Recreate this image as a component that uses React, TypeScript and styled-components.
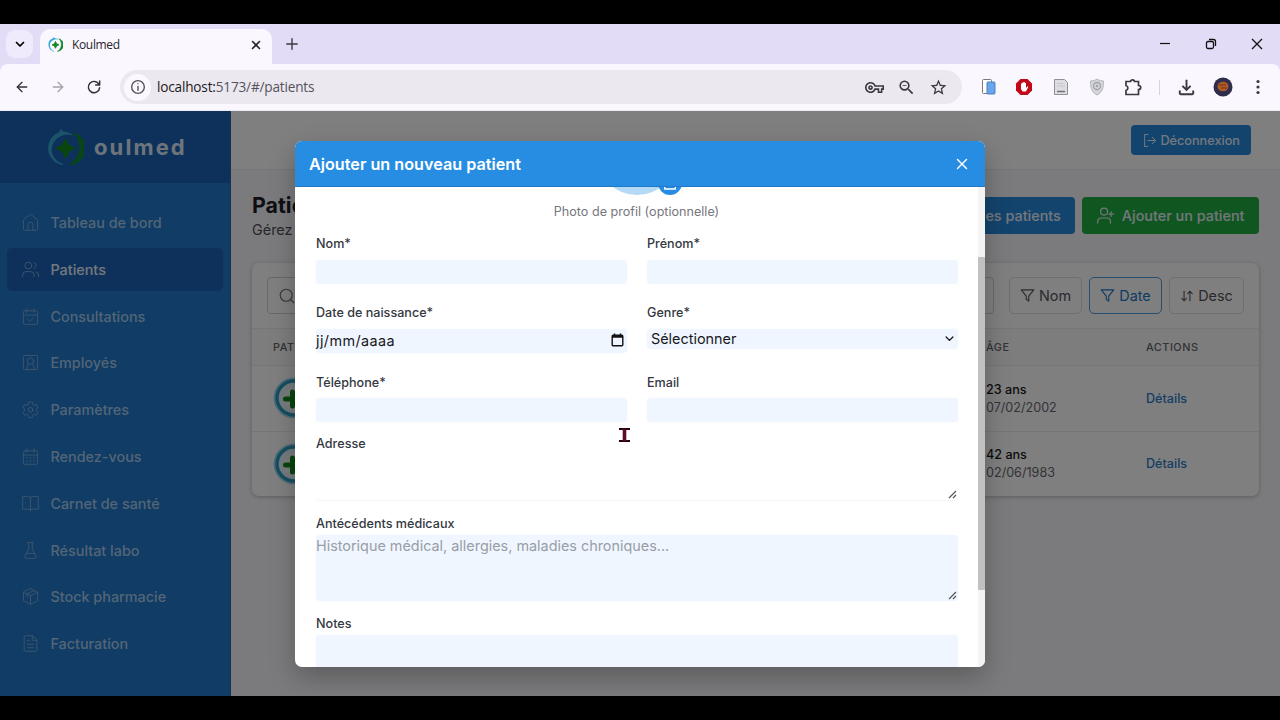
import React from "react";
import styled, {createGlobalStyle} from "styled-components";
import {
  ArrowDownUp,
  ArrowLeft,
  ArrowRight,
  Search,
  X,
} from "lucide-react";
import {
  MdOutlineFileDownload,
  MdOutlineStarBorder,
  MdOutlineVpnKey,
  MdOutlineZoomOut,
} from "react-icons/md";

const GlobalStyle = createGlobalStyle`
  * {
    box-sizing: border-box;
  }

  body {
    margin: 0;
    background: #000;
    font-family: Inter, "Liberation Sans", sans-serif;
    overflow: hidden;
  }
`;

const Screen = styled.div`
  width: 1280px;
  height: 720px;
  padding: 24px 0;
  background: #000;
  display: flex;
  flex-direction: column;
`;

/* Browser */

const TabStrip = styled.div`
  height: 40px;
  flex: none;
  display: flex;
  align-items: center;
  background: #e2dcf6;
  padding-left: 6px;
`;

const TabSearch = styled.div`
  width: 27px;
  height: 28px;
  border-radius: 9px;
  background: #f0ebfc;
  display: flex;
  align-items: center;
  justify-content: center;
`;

const Tab = styled.div`
  width: 232px;
  height: 35px;
  margin: 5px 0 0 7px;
  padding: 0 9px 4px 8px;
  border-radius: 10px 10px 0 0;
  background: #faf7fe;
  display: flex;
  align-items: center;
  font-family: "Open Sans", "Noto Sans", sans-serif;
  font-size: 12px;
  letter-spacing: -0.35px;
  color: #26242b;
`;

const TabTitle = styled.span`
  margin-left: 9px;
  flex: 1;
`;

const NewTab = styled.div`
  margin-left: 13px;
  display: flex;
  flex: 1;
  color: #3b3940;
`;

const WindowButtons = styled.div`
  display: flex;
  align-items: center;
  gap: 34px;
  margin-right: 17px;
`;

const Toolbar = styled.div`
  height: 47px;
  flex: none;
  display: flex;
  align-items: center;
  background: #faf7fe;
  border-bottom: 1px solid #eeeaf2;
  border-radius: 8px 8px 0 0;
  padding-left: 14px;
  overflow: hidden;
`;

const ToolbarBack = styled.div`
  background: #e2dcf6;
`;

const NavButtons = styled.div`
  width: 106px;
  flex: none;
  display: flex;
  gap: 20px;
  color: #333138;
`;

const AddressBar = styled.div`
  width: 842px;
  flex: none;
  height: 34px;
  border-radius: 17px;
  background: #ebe8f0;
  display: flex;
  align-items: center;
  padding: 0 14px 0 4px;
  font-family: "Open Sans", "Noto Sans", sans-serif;
  font-size: 13.6px;
  letter-spacing: -0.18px;
  color: #55525c;

  b {
    font-weight: 400;
    color: #1d1b20;
  }
`;

const SiteInfo = styled.div`
  width: 27px;
  height: 27px;
  border-radius: 50%;
  background: #fbf9ff;
  display: flex;
  align-items: center;
  justify-content: center;
  margin-right: 6px;
`;

const Url = styled.span`
  flex: 1;
  padding-bottom: 1px;
`;

const BarIcons = styled.div`
  display: flex;
  align-items: center;
  gap: 13px;
  color: #3b3940;
`;

const Extensions = styled.div`
  flex: none;
  display: flex;
  align-items: center;
  padding-left: 8px;
  color: #3b3940;
`;

const ToolSlot = styled.div<{$width?: number}>`
  width: ${({$width}) => $width || 36.3}px;
  flex: none;
  display: flex;
  justify-content: center;
`;

const Divider = styled.div`
  width: 1px;
  height: 15px;
  background: #d8d3e2;
`;

/* Application */

const Page = styled.div`
  position: relative;
  flex: 1;
  min-height: 0;
  display: flex;
  background: #f6f6fa;
  overflow: hidden;
`;

const Sidebar = styled.aside`
  width: 231px;
  flex: none;
  background: #2078ca;
  border-right: 1px solid #35689e;
`;

const Brand = styled.div`
  height: 72px;
  background: #1a62b4;
  display: flex;
  align-items: center;
  padding-left: 47px;
  font-size: 22px;
  font-weight: 700;
  letter-spacing: 2.1px;
  color: #dce9f6;
`;

const BrandName = styled.span`
  margin-left: 10px;
`;

const Menu = styled.nav`
  padding: 18px 7px 0 7px;
  display: flex;
  flex-direction: column;
  gap: 3.8px;
`;

const MenuItem = styled.div<{$active?: boolean}>`
  height: 43px;
  border-radius: 5px;
  padding-left: 15px;
  display: flex;
  align-items: center;
  gap: 11.4px;
  font-size: 14.4px;
  font-weight: 500;
  color: ${({$active}) => ($active ? "#e8f1fb" : "#a6cbec")};
  background: ${({$active}) => ($active ? "#1a62b4" : "transparent")};

  svg {
    color: #74a9db;
  }
`;

const Main = styled.main`
  flex: 1;
  min-width: 0;
`;

const TopBar = styled.header`
  height: 59px;
  background: #fff;
  border-bottom: 1px solid #e8e8ec;
  display: flex;
  align-items: center;
  justify-content: flex-end;
  padding-right: 29px;
`;

const Button = styled.button<{$color: string; $small?: boolean}>`
  height: ${({$small}) => ($small ? "30px" : "37px")};
  border: none;
  border-radius: 4px;
  background: ${({$color}) => $color};
  color: #e8f0fa;
  font-family: inherit;
  font-size: ${({$small}) => ($small ? "12.7px" : "14.4px")};
  font-weight: 500;
  display: flex;
  align-items: center;
  gap: ${({$small}) => ($small ? "4px" : "8px")};
  white-space: nowrap;
  padding: ${({$small}) => ($small ? "0 11px 0 12px" : "0 14.5px")};
`;

const Content = styled.div`
  padding: 23px 21px 0;
`;

const Heading = styled.div`
  display: flex;
  justify-content: space-between;
  height: 70px;
`;

const Title = styled.h1`
  margin: 0;
  font-size: 21.4px;
  line-height: 25px;
  font-weight: 700;
  color: #1c1c28;
`;

const Subtitle = styled.p`
  margin: 0;
  font-size: 14.4px;
  line-height: 24px;
  color: #505058;
`;

const Actions = styled.div`
  display: flex;
  gap: 7px;
  padding-top: 4px;
`;

const Card = styled.section`
  height: 233px;
  background: #fff;
  border-radius: 7px;
  box-shadow: 0 1px 4px rgba(0, 0, 0, 0.25);
`;

const Filters = styled.div`
  height: 65px;
  display: flex;
  align-items: center;
  padding: 0 15px;
`;

const SearchBox = styled.div`
  width: 727px;
  flex: none;
  height: 37px;
  border: 1px solid #d0d0d4;
  border-radius: 4px;
  display: flex;
  align-items: center;
  padding-left: 10px;
  color: #707078;
  margin-right: 15px;
`;

const FilterButton = styled.div<{$width: number; $active?: boolean}>`
  width: ${({$width}) => $width}px;
  flex: none;
  height: 37px;
  margin-right: 7px;
  border: 1px solid ${({$active}) => ($active ? "#4a9ae0" : "#dcdce0")};
  border-radius: 5px;
  display: flex;
  align-items: center;
  justify-content: center;
  gap: 4px;
  font-size: 14.4px;
  color: ${({$active}) => ($active ? "#1f78c8" : "#55555c")};
`;

const TableRow = styled.div<{$head?: boolean}>`
  height: ${({$head}) => ($head ? "37px" : "65.5px")};
  display: grid;
  grid-template-columns: 713px 160px 1fr;
  align-items: center;
  padding-left: 21px;
  border-top: 1px solid #ececf0;
  background: ${({$head}) => ($head ? "#fafafa" : "transparent")};
  font-size: ${({$head}) => ($head ? "10.8px" : "12.6px")};
  font-weight: ${({$head}) => ($head ? 500 : 400)};
  letter-spacing: ${({$head}) => ($head ? "0.55px" : "0")};
  color: #66666e;
`;

const Age = styled.div`
  line-height: 18px;
  padding-top: 1px;

  strong {
    display: block;
    font-weight: 500;
    color: #18181c;
  }
`;

const DetailsLink = styled.a`
  font-weight: 500;
  color: #2b7cc6;
`;

/* Modal */

const Overlay = styled.div`
  position: absolute;
  inset: 0;
  background: rgba(0, 0, 0, 0.5);
  display: flex;
  justify-content: center;
  padding-top: 29.5px;
`;

const Modal = styled.div`
  width: 690px;
  height: 526.5px;
  border-radius: 7px;
  background: #fff;
  overflow: hidden;
  display: flex;
  flex-direction: column;
  box-shadow: 0 10px 26px rgba(0, 0, 0, 0.25);
`;

const ModalHeader = styled.div`
  height: 46.5px;
  flex: none;
  background: #268de2;
  border-bottom: 1px solid #2279c6;
  color: #fff;
  font-size: 16.2px;
  font-weight: 600;
  display: flex;
  align-items: center;
  justify-content: space-between;
  padding: 1px 14px 0 14px;
`;

const ModalBody = styled.div`
  flex: 1;
  min-height: 0;
  display: flex;
  overflow: hidden;
`;

const Form = styled.div`
  flex: 1;
  padding: 0 20px 0 21px;
  margin-top: -72px;
`;

const PhotoField = styled.div`
  height: 120px;
  padding-right: 1px;
  display: flex;
  flex-direction: column;
  align-items: center;
  font-size: 12.6px;
  color: #77777e;
`;

const Photo = styled.div`
  position: relative;
  width: 80px;
  height: 80px;
  border-radius: 50%;
  background: #b4d9f7;
  margin-bottom: 9px;
`;

const PhotoBadge = styled.div`
  position: absolute;
  right: -5px;
  bottom: 0;
  width: 24px;
  height: 24px;
  border-radius: 50%;
  background: #268de2;
  color: #fff;
  display: flex;
  align-items: center;
  justify-content: center;
`;

const Columns = styled.div<{$height: number}>`
  display: grid;
  grid-template-columns: 310.5px 311px;
  gap: 20.5px;
  height: ${({$height}) => $height}px;
`;

const Field = styled.div<{$height?: number}>`
  height: ${({$height}) => ($height ? `${$height}px` : "auto")};
`;

const Label = styled.div<{$gap: number}>`
  height: 18px;
  line-height: 18px;
  margin-bottom: ${({$gap}) => $gap}px;
  font-size: 12.6px;
  font-weight: 500;
  color: #34383f;
`;

const Control = styled.div<{$height: number; $plain?: boolean}>`
  height: ${({$height}) => $height}px;
  border-radius: 4px;
  background: ${({$plain}) => ($plain ? "#fff" : "#f0f6ff")};
  box-shadow: ${({$plain}) => ($plain ? "0 1px 1px #f4f4f6" : "0 0 2px #f0f6ff")};
  display: flex;
  align-items: center;
  justify-content: space-between;
  font-size: 14.4px;
  color: #18181c;
`;

const SelectControl = styled(Control)`
  padding: 0 4px 1px 4px;
`;

const DateControl = styled(Control)`
  padding: 0 3px 2px 0;
  letter-spacing: 0.42px;
`;

const Area = styled(Control)`
  align-items: flex-start;
  line-height: 22px;
  color: #989ea6;

  svg {
    align-self: flex-end;
    margin: 0 1px 1px auto;
  }
`;

const Scrollbar = styled.div`
  width: 7px;
  background: #f4f4f4;
  padding-top: 70px;
`;

const Thumb = styled.div`
  height: 333px;
  border-radius: 1px;
  background: #c1c1c1;
`;

const Pointer = styled.svg`
  position: absolute;
  left: 618px;
  top: 316px;
`;

const Icon: React.FC<{size?: number; width?: number; children: React.ReactNode}> = ({
  size = 17,
  width = 1.4,
  children,
}) => (
  <svg
    width={size}
    height={size}
    viewBox="0 0 24 24"
    fill="none"
    stroke="currentColor"
    strokeWidth={width}
    strokeLinecap="round"
    strokeLinejoin="round"
  >
    {children}
  </svg>
);

const Calendar = () => (
  <>
    <rect x="2" y="4" width="20" height="19" rx="2" />
    <path d="M2 10h20M7 1v5M17 1v5" />
  </>
);

const Funnel = () => (
  <Icon size={15} width={1.8}>
    <path d="M2 3h20l-8 10v8l-4-3v-5z" />
  </Icon>
);

const Grip = () => (
  <svg width="9" height="9" viewBox="0 0 9 9" stroke="#55555c" strokeWidth="1.2">
    <path d="M1 8 8 1M5 8l3-3" />
  </svg>
);

const Logo: React.FC<{size: number}> = ({size}) => (
  <svg width={size} height={size} viewBox="0 0 38 38" fill="none">
    <path d="M13 3A17.5 17.5 0 0 0 17 37A15.5 15.5 0 0 1 14 7.500Q20 4 27 7Q21 1.500 13 3z" fill="#39a9d9" />
    <path d="M16 36.5A17 17 0 0 1 14 4.5" stroke="#39a9d9" strokeWidth="1.5" />
    <path d="M27 4A16.5 16.5 0 0 1 23 36.5A20 20 0 0 0 27 4z" fill="#148a35" stroke="#148a35" />
    <circle cx="14.5" cy="2" r="1.6" fill="#39a9d9" />
    <path
      d="M19 11.5 21.5 17 27.5 19.8 21.5 22.5 19 28.5 16.5 22.5 10.5 19.8 16.5 17z"
      fill="#148a1c"
      stroke="#148a1c"
      strokeWidth="2.5"
      strokeLinejoin="round"
    />
  </svg>
);

const PatientAvatar = () => (
  <svg width="42" height="42" viewBox="0 0 42 42">
    <circle cx="21" cy="21" r="20.5" fill="#a3dcf1" />
    <circle cx="21" cy="21" r="17" fill="#e8f7fc" stroke="#2c9fc3" strokeWidth="3.5" />
    <circle cx="24" cy="22" r="13" fill="#f6fbfd" />
    <path
      d="M19.5 15v14M12.5 22h15"
      stroke="#128a17"
      strokeWidth="5"
      strokeLinecap="round"
    />
  </svg>
);

const menu = [
  {
    label: "Tableau de bord",
    icon: (
      <>
        <path d="M2 9.5v12a1.5 1.5 0 0 0 1.5 1.5h17a1.5 1.5 0 0 0 1.5-1.5v-12a3 3 0 0 0-1-2l-7.5-6.2a2.4 2.4 0 0 0-3 0L3 7.5a3 3 0 0 0-1 2z" />
        <path d="M8.5 23v-8a3.5 3.5 0 0 1 7 0v8" />
      </>
    ),
  },
  {
    label: "Patients",
    icon: (
      <>
        <circle cx="9" cy="6.5" r="4.8" />
        <path d="M1 22v-2.5a4.5 4.5 0 0 1 4.5-4.5h7a4.5 4.5 0 0 1 4.5 4.5V22M17 2a4.8 4.8 0 0 1 0 9M20 15.5a4.5 4.5 0 0 1 3.3 4.2V22" />
      </>
    ),
  },
  {
    label: "Consultations",
    icon: (
      <>
        <Calendar />
        <path d="m8 16 3 3 5.5-5.5" />
      </>
    ),
  },
  {
    label: "Employés",
    icon: (
      <>
        <rect x="2" y="2" width="20" height="20" rx="1.5" />
        <circle cx="12" cy="10" r="4.5" />
        <path d="m9 13.5-3 8M15 13.5l3 8" />
      </>
    ),
  },
  {
    label: "Paramètres",
    icon: (
      <>
        <path d="M9.7 1.5h4.6l.8 3.3 2 1.2 3.3-1 2.3 4-2.5 2.3v2.4l2.5 2.3-2.3 4-3.3-1-2 1.2-.8 3.3H9.7l-.8-3.3-2-1.2-3.3 1-2.3-4 2.5-2.3v-2.4L1.3 9l2.3-4 3.3 1 2-1.2z" />
        <circle cx="12" cy="12.5" r="3.3" />
      </>
    ),
  },
  {
    label: "Rendez-vous",
    icon: (
      <>
        <Calendar />
        <path d="M7 14h.01M12 14h.01M17 14h.01M7 18.5h.01M12 18.5h.01M17 18.5h.01" strokeWidth="2.2" />
      </>
    ),
  },
  {
    label: "Carnet de santé",
    icon: (
      <path d="M12 5v17M12 5a3 3 0 0 0-3-3H1v18h8a3 3 0 0 1 3 2 3 3 0 0 1 3-2h8V2h-8a3 3 0 0 0-3 3z" />
    ),
  },
  {
    label: "Résultat labo",
    icon: (
      <path d="M7.5 1h9M9.5 1v8.5L4 20.5a1.7 1.7 0 0 0 1.5 2.5h13a1.7 1.7 0 0 0 1.5-2.5L14.5 9.5V1M6.5 16h11" />
    ),
  },
  {
    label: "Stock pharmacie",
    icon: (
      <path d="M12 1 22 6v12l-10 5-10-5V6zM2 6l10 5 10-5M12 11v12M17 3.5l-10 5V13" />
    ),
  },
  {
    label: "Facturation",
    icon: (
      <path d="M14.5 1H5a2 2 0 0 0-2 2v18a2 2 0 0 0 2 2h14a2 2 0 0 0 2-2V7.5zM14.5 1v6.5H21M7.5 8h3M7.5 13h9M7.5 18h9" />
    ),
  },
];

const patients = [
  {age: "23 ans", birth: "07/02/2002"},
  {age: "42 ans", birth: "02/06/1983"},
];

const Browser: React.FC = () => (
  <>
    <TabStrip>
      <TabSearch>
        <Icon size={12} width={3.4}>
          <path d="m5 9 7 7 7-7" />
        </Icon>
      </TabSearch>
      <Tab>
        <Logo size={15} />
        <TabTitle>Koulmed</TabTitle>
        <X size={14} strokeWidth={2.8} />
      </Tab>
      <NewTab>
        <Icon size={14} width={2.4}>
          <path d="M12 3v18M3 12h18" />
        </Icon>
      </NewTab>
      <WindowButtons>
        <svg width="12" height="12" stroke="#111" strokeWidth="1.2">
          <path d="M1 5.5h10" />
        </svg>
        <svg width="12" height="12" fill="none" stroke="#111" strokeWidth="1.3">
          <rect x="1.5" y="3.5" width="7" height="7" rx="1.5" />
          <path d="M4 1.5h4.5a2 2 0 0 1 2 2V8" />
        </svg>
        <svg width="12" height="12" stroke="#111" strokeWidth="1.3">
          <path d="m1 1 10 10M11 1 1 11" />
        </svg>
      </WindowButtons>
    </TabStrip>
    <ToolbarBack>
      <Toolbar>
        <NavButtons>
          <ArrowLeft size={16} color="#333138" />
          <ArrowRight size={16} color="#a5a2ab" />
          <Icon size={16} width={2.2}>
            <path d="M19.5 8A8.5 8.5 0 1 0 20.5 13M20.5 3v6h-6" />
          </Icon>
        </NavButtons>
        <AddressBar>
          <SiteInfo>
            <Icon size={16} width={2.1}>
              <circle cx="12" cy="12" r="9.5" />
              <path d="M12 11v6M12 7h.01" />
            </Icon>
          </SiteInfo>
          <Url>
            <b>localhost:</b>5173/#/patients
          </Url>
          <BarIcons>
            <MdOutlineVpnKey size={19} />
            <MdOutlineZoomOut size={19} />
            <MdOutlineStarBorder size={19} />
          </BarIcons>
        </AddressBar>
        <Extensions>
          <ToolSlot>
            <svg width="17" height="18" viewBox="0 0 17 18">
              <rect x="2.5" y="1.5" width="9" height="14" rx="1" fill="#fff" stroke="#77777c" />
              <rect x="7" y="4" width="8" height="12" rx="1" fill="#65a6ee" stroke="#4c80bd" />
            </svg>
          </ToolSlot>
          <ToolSlot>
            <svg width="18" height="18" viewBox="0 0 18 18">
              <path d="M5.5 1h7L17 5.5v7L12.5 17h-7L1 12.5v-7z" fill="#c00818" />
              <path
                d="M6 9V5.5h1.2V9 4.5h1.3V9 4h1.3v5-4H11v5l1.5-1.7.8.7-2.3 4.5H7.5L6 11z"
                fill="#fff"
              />
            </svg>
          </ToolSlot>
          <ToolSlot>
            <svg width="16" height="18" viewBox="0 0 16 18">
              <path d="M1.5 1.5h10l3 3v12h-13z" fill="#dedee2" stroke="#909096" />
              <path d="M4 5.5h6M4 8h8" stroke="#c5c5ca" />
              <path d="M4 13.5h8" stroke="#707076" strokeWidth="1.5" />
            </svg>
          </ToolSlot>
          <ToolSlot>
            <svg width="16" height="18" viewBox="0 0 16 18">
              <path
                d="M8 1c2 1.5 4 1.8 6.5 2 0 7-1 11-6.5 14C2.5 14 1.5 10 1.5 3 4 2.8 6 2.5 8 1z"
                fill="#d5d6db"
                stroke="#b2b3ba"
              />
              <circle cx="8" cy="8" r="3.5" fill="none" stroke="#9ea0aa" strokeWidth="1.3" />
              <circle cx="8" cy="8" r="1.2" fill="#9ea0aa" />
            </svg>
          </ToolSlot>
          <ToolSlot>
            <svg width="18" height="18" viewBox="0 0 18 18" fill="none" stroke="#3b3940" strokeWidth="1.7">
              <path d="M2 3.5h4.5a2 1.7 0 0 1 4 0h4v4a2 1.8 0 0 1 0 4v5H2v-4a2.6 2.6 0 0 0 0-5z" />
            </svg>
          </ToolSlot>
          <ToolSlot $width={17}>
            <Divider />
          </ToolSlot>
          <ToolSlot $width={37}>
            <MdOutlineFileDownload size={23} />
          </ToolSlot>
          <ToolSlot $width={35}>
            <svg width="20" height="20" viewBox="0 0 20 20">
              <circle cx="10" cy="10" r="9.5" fill="#2f2d4d" />
              <ellipse cx="10" cy="9.5" rx="5.5" ry="4.8" fill="#b05a24" />
              <path d="M6 8h7M8 11h6" stroke="#6a3420" strokeWidth="1.2" />
            </svg>
          </ToolSlot>
          <ToolSlot $width={36}>
            <svg width="16" height="16" fill="#3b3940">
              <circle cx="8" cy="2.5" r="1.6" />
              <circle cx="8" cy="8" r="1.6" />
              <circle cx="8" cy="13.5" r="1.6" />
            </svg>
          </ToolSlot>
        </Extensions>
      </Toolbar>
    </ToolbarBack>
  </>
);

const PatientsPage: React.FC = () => (
  <>
    <Sidebar>
      <Brand>
        <Logo size={37} />
        <BrandName>oulmed</BrandName>
      </Brand>
      <Menu>
        {menu.map((item) => (
          <MenuItem key={item.label} $active={item.label === "Patients"}>
            <Icon>{item.icon}</Icon>
            {item.label}
          </MenuItem>
        ))}
      </Menu>
    </Sidebar>
    <Main>
      <TopBar>
        <Button $color="#2688dc" $small>
          <Icon size={13} width={1.9}>
            <path d="M9 1H3v22h6M9 12h14M17 6l6 6-6 6" />
          </Icon>
          Déconnexion
        </Button>
      </TopBar>
      <Content>
        <Heading>
          <div>
            <Title>Patients</Title>
            <Subtitle>Gérez</Subtitle>
          </div>
          <Actions>
            <Button $color="#2688dc">Liste des patients</Button>
            <Button $color="#20ad42">
              <Icon width={1.6}>
                <circle cx="10" cy="6.5" r="5" />
                <path d="M1 23v-2.5a5 5 0 0 1 5-5h8a5 5 0 0 1 5 5V23M20 6.5v7M16.5 10h7" />
              </Icon>
              Ajouter un patient
            </Button>
          </Actions>
        </Heading>
        <Card>
          <Filters>
            <SearchBox>
              <Search size={18} strokeWidth={1.5} />
            </SearchBox>
            <FilterButton $width={73}>
              <Funnel />
              Nom
            </FilterButton>
            <FilterButton $width={73} $active>
              <Funnel />
              Date
            </FilterButton>
            <FilterButton $width={75}>
              <ArrowDownUp size={14} strokeWidth={1.8} />
              Desc
            </FilterButton>
          </Filters>
          <TableRow $head>
            <span>PATIENT</span>
            <span>ÂGE</span>
            <span>ACTIONS</span>
          </TableRow>
          {patients.map((patient) => (
            <TableRow key={patient.birth}>
              <PatientAvatar />
              <Age>
                <strong>{patient.age}</strong>
                {patient.birth}
              </Age>
              <DetailsLink>Détails</DetailsLink>
            </TableRow>
          ))}
        </Card>
      </Content>
    </Main>
  </>
);

const AddPatientModal: React.FC = () => (
  <Overlay>
    <Modal>
      <ModalHeader>
        Ajouter un nouveau patient
        <X size={18} strokeWidth={2} />
      </ModalHeader>
      <ModalBody>
        <Form>
          <PhotoField>
            <Photo>
              <PhotoBadge>
                <Icon size={16} width={2}>
                  <path d="M4 6h3l2-3h6l2 3h3v15H4z" />
                </Icon>
              </PhotoBadge>
            </Photo>
            Photo de profil (optionnelle)
          </PhotoField>
          <Columns $height={69}>
            <Field>
              <Label $gap={7}>Nom*</Label>
              <Control $height={24} />
            </Field>
            <Field>
              <Label $gap={7}>Prénom*</Label>
              <Control $height={24} />
            </Field>
          </Columns>
          <Columns $height={70}>
            <Field>
              <Label $gap={7}>Date de naissance*</Label>
              <DateControl $height={24}>
                jj/mm/aaaa
                <svg width="13" height="14" viewBox="0 0 13 14" fill="none" stroke="#111">
                  <rect x="1.2" y="2.2" width="10.6" height="10.6" rx="1" strokeWidth="1.4" />
                  <path d="M1 3.5h11" strokeWidth="2.5" />
                  <path d="M3.5.5v2M9.5.5v2" strokeWidth="1.5" />
                </svg>
              </DateControl>
            </Field>
            <Field>
              <Label $gap={6.5}>Genre*</Label>
              <SelectControl $height={20}>
                Sélectionner
                <Icon size={9} width={3.6}>
                  <path d="m3 8 9 9 9-9" />
                </Icon>
              </SelectControl>
            </Field>
          </Columns>
          <Columns $height={61}>
            <Field>
              <Label $gap={6}>Téléphone*</Label>
              <Control $height={24} />
            </Field>
            <Field>
              <Label $gap={6}>Email</Label>
              <Control $height={24} />
            </Field>
          </Columns>
          <Field $height={80}>
            <Label $gap={2}>Adresse</Label>
            <Area $height={45} $plain>
              <Grip />
            </Area>
          </Field>
          <Field $height={100}>
            <Label $gap={2}>Antécédents médicaux</Label>
            <Area $height={66}>
              Historique médical, allergies, maladies chroniques...
              <Grip />
            </Area>
          </Field>
          <Field>
            <Label $gap={2}>Notes</Label>
            <Area $height={67} />
          </Field>
        </Form>
        <Scrollbar>
          <Thumb />
        </Scrollbar>
      </ModalBody>
    </Modal>
  </Overlay>
);

const App: React.FC = () => (
  <Screen>
    <GlobalStyle />
    <Browser />
    <Page>
      <PatientsPage />
      <AddPatientModal />
      <Pointer width="13" height="16" viewBox="0 0 13 16">
        <path d="M1 2h11M1 14h11" stroke="#26040c" strokeWidth="2.2" />
        <path d="M6.5 2v12" stroke="#5c0c20" strokeWidth="3.6" />
      </Pointer>
    </Page>
  </Screen>
);

export default App;
